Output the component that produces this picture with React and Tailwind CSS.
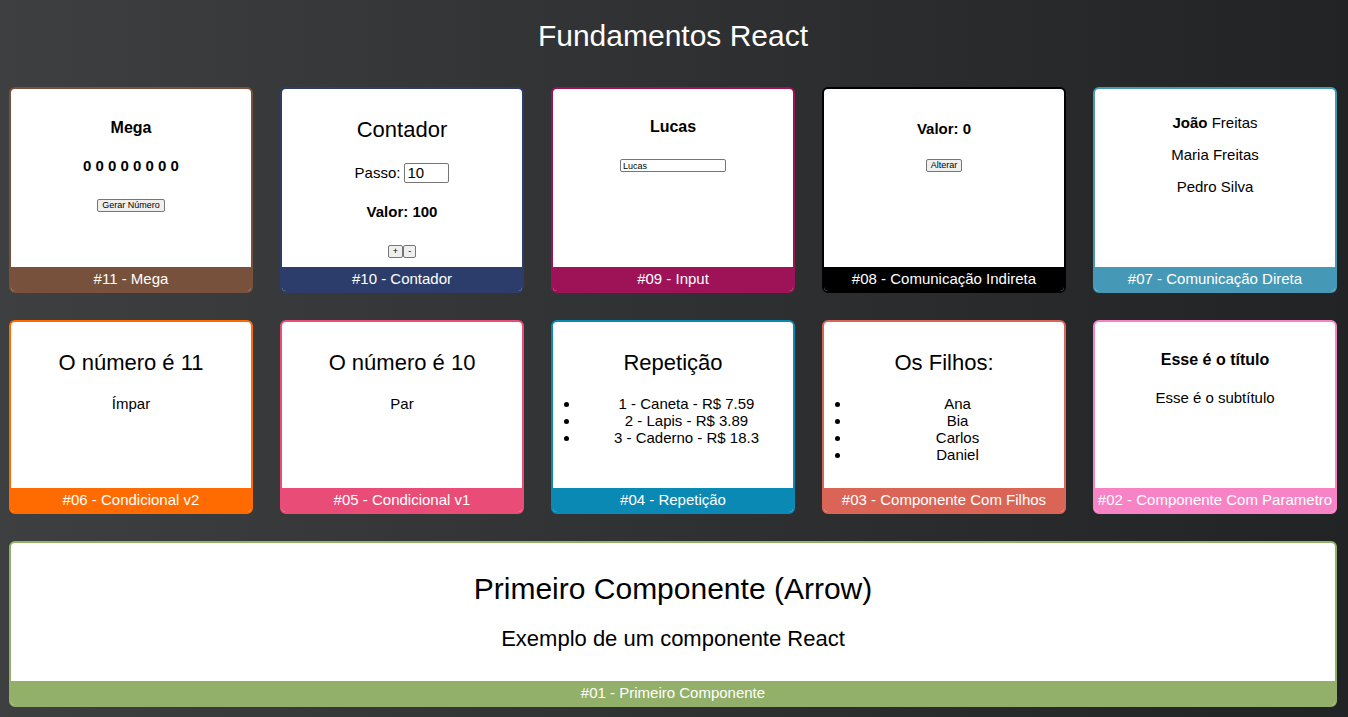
import React from 'react';

const btn = 'border border-[#767676] bg-[#efefef] rounded-[2px] text-[9px] leading-[11px] px-[4px] text-black';

function Card({ title, color, children, contentH }) {
	return (
		<div className={`rounded-[6px] border-2 overflow-hidden bg-white flex flex-col ${color.border}`}>
			<div className={`flex flex-col items-center text-black ${contentH}`}>{children}</div>
			<div className={`h-[24px] leading-[24px] text-center text-white text-[15px] whitespace-nowrap ${color.bg}`}>{title}</div>
		</div>
	);
}

const c = (b, bg) => ({ border: b, bg });

export default function App() {
	const row1 = 'h-[178px]';
	const row2 = 'h-[166px]';
	return (
		<div className="min-h-[717px] bg-linear-to-r from-[#3e3f41] to-[#222325] font-['Liberation_Sans',Arial,sans-serif] pl-[9px] pr-[11px] pb-[10px]">
			<h1 className="text-white text-[30px] leading-[36px] text-center pt-[18px]">Fundamentos React</h1>

			<div className="grid grid-cols-5 gap-x-[27px] gap-y-[27px] mt-[33px]">
				{/* #11 */}
				<Card title="#11 - Mega" color={c('border-[#77513b]', 'bg-[#77513b]')} contentH={row1}>
					<div className="mt-[29px] text-[16px] leading-[20px] font-bold">Mega</div>
					<div className="mt-[19px] text-[15px] leading-[18px] font-bold whitespace-pre">0 0 0 0 0 0 0 0</div>
					<button className={`mt-[24px] ${btn}`}>Gerar Número</button>
				</Card>

				{/* #10 */}
				<Card title="#10 - Contador" color={c('border-[#2c3d6b]', 'bg-[#2c3d6b]')} contentH={row1}>
					<div className="mt-[28px] text-[22px] leading-[26px]">Contador</div>
					<div className="mt-[20px] flex items-center text-[15px] leading-[20px]">
						<span>Passo:</span>
						<input readOnly value="10" className="ml-[4px] w-[45px] h-[20px] border border-[#767676] rounded-[2px] px-[2px] text-[15px] text-black outline-none" />
					</div>
					<div className="mt-[20px] text-[15px] leading-[18px] font-bold">Valor: 100</div>
					<div className="mt-[24px] flex">
						<button className={btn}>+</button>
						<button className={btn}>-</button>
					</div>
				</Card>

				{/* #09 */}
				<Card title="#09 - Input" color={c('border-[#9e1358]', 'bg-[#9e1358]')} contentH={row1}>
					<div className="mt-[28px] text-[16px] leading-[20px] font-bold">Lucas</div>
					<input readOnly value="Lucas" className="mt-[22px] w-[106px] h-[13px] border border-[#767676] rounded-[2px] px-[2px] text-[9px] leading-[11px] text-black outline-none" />
				</Card>

				{/* #08 */}
				<Card title="#08 - Comunicação Indireta" color={c('border-black', 'bg-black')} contentH={row1}>
					<div className="mt-[31px] text-[15px] leading-[18px] font-bold">Valor: 0</div>
					<button className={`mt-[21px] ${btn}`}>Alterar</button>
				</Card>

				{/* #07 */}
				<Card title="#07 - Comunicação Direta" color={c('border-[#4699b6]', 'bg-[#4699b6]')} contentH={row1}>
					<div className="mt-[25px] text-[15px] leading-[18px]"><b>João</b> Freitas</div>
					<div className="mt-[14px] text-[15px] leading-[18px]">Maria Freitas</div>
					<div className="mt-[14px] text-[15px] leading-[18px]">Pedro Silva</div>
				</Card>

				{/* #06 */}
				<Card title="#06 - Condicional v2" color={c('border-[#ff6b00]', 'bg-[#ff6b00]')} contentH={row2}>
					<div className="mt-[28px] text-[22px] leading-[26px]">O número é 11</div>
					<div className="mt-[19px] text-[15px] leading-[18px]">Ímpar</div>
				</Card>

				{/* #05 */}
				<Card title="#05 - Condicional v1" color={c('border-[#e94c76]', 'bg-[#e94c76]')} contentH={row2}>
					<div className="mt-[28px] text-[22px] leading-[26px]">O número é 10</div>
					<div className="mt-[19px] text-[15px] leading-[18px]">Par</div>
				</Card>

				{/* #04 */}
				<Card title="#04 - Repetição" color={c('border-[#0a89b5]', 'bg-[#0a89b5]')} contentH={row2}>
					<div className="mt-[28px] text-[22px] leading-[26px]">Repetição</div>
					<ul className="mt-[19px] self-stretch list-disc pl-[27px] text-center text-[15px] leading-[17px]">
						<li>1 - Caneta - R$ 7.59</li>
						<li>2 - Lapis - R$ 3.89</li>
						<li>3 - Caderno - R$ 18.3</li>
					</ul>
				</Card>

				{/* #03 */}
				<Card title="#03 - Componente Com Filhos" color={c('border-[#da6557]', 'bg-[#da6557]')} contentH={row2}>
					<div className="mt-[28px] text-[22px] leading-[26px]">Os Filhos:</div>
					<ul className="mt-[19px] self-stretch list-disc pl-[27px] text-center text-[15px] leading-[17px]">
						<li>Ana</li>
						<li>Bia</li>
						<li>Carlos</li>
						<li>Daniel</li>
					</ul>
				</Card>

				{/* #02 */}
				<Card title="#02 - Componente Com Parametro" color={c('border-[#f783c6]', 'bg-[#f783c6]')} contentH={row2}>
					<div className="mt-[28px] text-[16px] leading-[20px] font-bold">Esse é o título</div>
					<div className="mt-[19px] text-[15px] leading-[18px]">Esse é o subtítulo</div>
				</Card>
			</div>

			<div className="mt-[27px]">
				<Card title="#01 - Primeiro Componente" color={c('border-[#93b06a]', 'bg-[#93b06a]')} contentH="h-[138px]">
					<div className="mt-[29px] text-[30px] leading-[34px]">Primeiro Componente (Arrow)</div>
					<div className="mt-[20px] text-[22px] leading-[26px]">Exemplo de um componente React</div>
				</Card>
			</div>
		</div>
	);
}
